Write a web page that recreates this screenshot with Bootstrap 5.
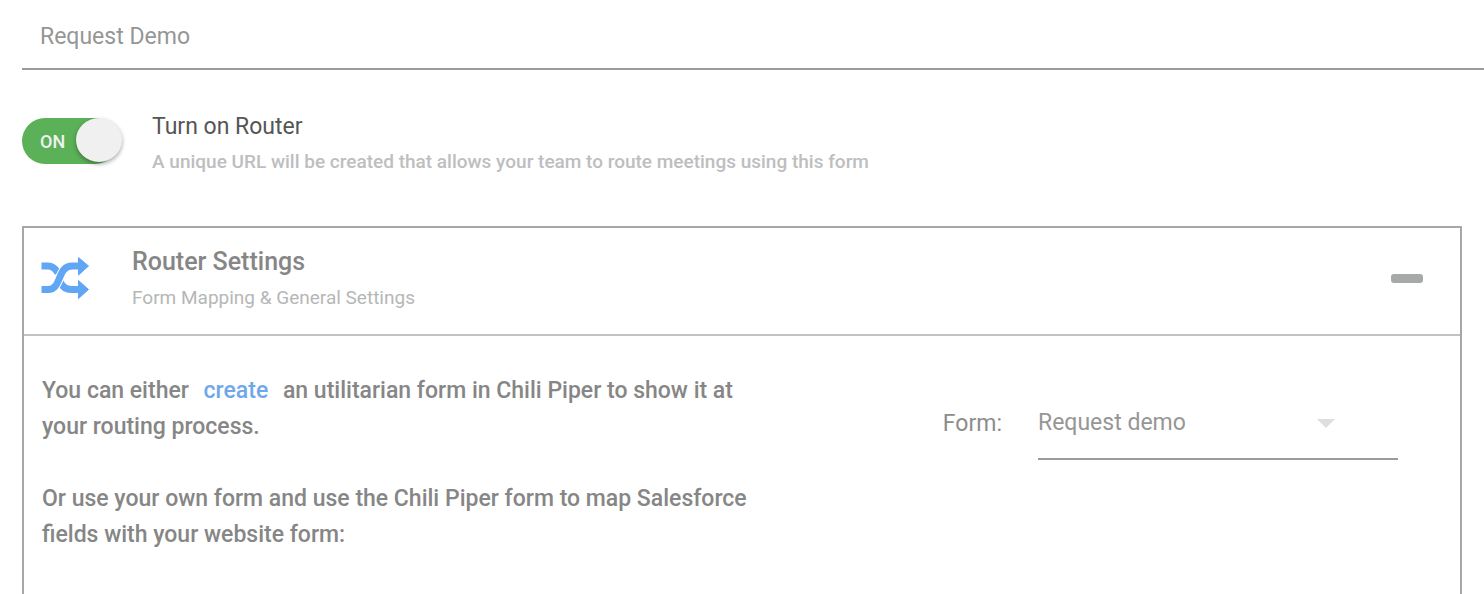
<!DOCTYPE html>
<html lang="en">
<head>
<meta charset="utf-8">
<meta name="viewport" content="width=device-width, initial-scale=1">
<title>Router</title>
<link href="https://cdn.jsdelivr.net/npm/bootstrap@5.3.0/dist/css/bootstrap.min.css" rel="stylesheet">
<style>
body{font-family:Roboto,sans-serif;font-size:23px;line-height:36px;color:#868686;background:#fff}
.page{padding-left:22px}
.name-field{height:70px;border:0;border-bottom:2px solid #9b9b9b;padding:4px 18px 0;color:#969696;outline:0;background:none}
.router-row{padding-top:38px;gap:28px}
.switch{width:102px;height:46px;margin-top:10px}
.track{width:96px;height:46px;border-radius:23px;background:#5bb157;color:#f1f1f1;font-size:18px;line-height:48px;padding-left:18px}
.knob{right:2px;top:0;width:46px;height:44px;border-radius:50%;background:#f0f0f0;box-shadow:0 2px 4px rgba(0,0,0,.35)}
.title{color:#555;padding-top:2px;line-height:34px}
.hint{font-size:19px;color:#bdbec0}
.panel{margin:46px 22px 0 0;border:2px solid #a7a7a7}
.panel-top{height:108px;padding:16px 37px 0 16px;border-bottom:2px solid #c2c2c2}
.panel-top h2{font-size:25px;line-height:36px}
.panel-top .hint{color:#b5b7b7}
.shuffle{width:50px;height:42px;margin:13px 42px 0 0}
.collapse-btn{width:32px;height:9px;border:0;border-radius:3px;background:#a7a9a8;padding:0;margin-top:30px}
.panel-main{padding:37px 62px 0 18px}
.copy p{margin-bottom:36px}
.copy a{color:#6fa8ea;margin:0 9px}
.form-choice{gap:36px;padding-top:15px;color:#8c8c8c}
.pick-box{width:360px}
.pick{height:72px;border:0;border-bottom:2px solid #9b9b9b;color:#969696;appearance:none;background:none;padding:0;outline:0}
.caret{right:63px;top:31px;width:18px;height:9px;pointer-events:none}
</style>
</head>
<body>
<main class="page min-vh-100 d-flex flex-column">
  <input class="name-field d-block w-100" type="text" aria-label="Name" value="Request Demo">
  <div class="router-row d-flex">
    <label class="switch position-relative flex-shrink-0" for="router-on">
      <input class="position-absolute opacity-0" id="router-on" type="checkbox" role="switch" aria-label="Turn on Router" checked>
      <span class="track d-block fw-medium">ON</span>
      <span class="knob position-absolute"></span>
    </label>
    <div>
      <label class="title d-block" for="router-on">Turn on Router</label>
      <p class="hint fw-medium mb-0">A unique URL will be created that allows your team to route meetings using this form</p>
    </div>
  </div>
  <section class="panel flex-grow-1 border-bottom-0">
    <header class="panel-top d-flex">
      <svg class="shuffle flex-shrink-0" viewBox="0 0 50 42" aria-hidden="true">
        <g fill="none" stroke="#61a5f5" stroke-width="7">
          <path d="M1.500 9H8Q14 9 18 16"/>
          <path d="M20 25Q24 32.500 31 32.500H39"/>
        </g>
        <path d="M1.500 32.500H8C22 32.500 17 9 32 9H39" fill="none" stroke="#fff" stroke-width="9"/>
        <path d="M1.500 32.500H8C22 32.500 17 9 32 9H39" fill="none" stroke="#61a5f5" stroke-width="7"/>
        <path d="M38.500 0.500 48.500 9 38.500 18ZM38.500 23.500 48.500 32.500 38.500 41.500Z" fill="#61a5f5" stroke="#61a5f5" stroke-linejoin="round"/>
      </svg>
      <div class="me-auto">
        <h2 class="fw-medium mb-0">Router Settings</h2>
        <p class="hint mb-0">Form Mapping &amp; General Settings</p>
      </div>
      <button class="collapse-btn" type="button" aria-label="Collapse"></button>
    </header>
    <div class="panel-main d-flex justify-content-between">
      <div class="copy fw-medium">
        <p>You can either <a class="text-decoration-none" href="#">create</a> an utilitarian form in Chili Piper to show it at<br>your routing process.</p>
        <p class="mb-0">Or use your own form and use the Chili Piper form to map Salesforce<br>fields with your website form:</p>
      </div>
      <div class="form-choice d-flex align-items-center align-self-start">
        <label for="form-pick">Form:</label>
        <div class="pick-box position-relative">
          <select class="pick d-block w-100" id="form-pick"><option>Request demo</option></select>
          <svg class="caret position-absolute" viewBox="0 0 18 9" aria-hidden="true"><path d="M0 0H18L9 9Z" fill="#dedede"/></svg>
        </div>
      </div>
    </div>
  </section>
</main>
<script src="https://cdn.jsdelivr.net/npm/bootstrap@5.3.0/dist/js/bootstrap.bundle.min.js"></script>
</body>
</html>
